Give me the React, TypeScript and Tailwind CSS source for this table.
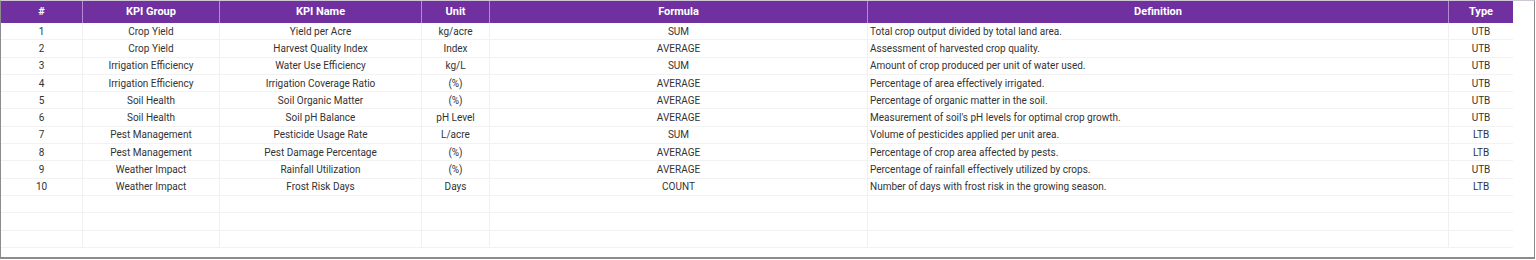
import React from "react";

const rows = [
  ["1", "Crop Yield", "Yield per Acre", "kg/acre", "SUM", "Total crop output divided by total land area.", "UTB"],
  ["2", "Crop Yield", "Harvest Quality Index", "Index", "AVERAGE", "Assessment of harvested crop quality.", "UTB"],
  ["3", "Irrigation Efficiency", "Water Use Efficiency", "kg/L", "SUM", "Amount of crop produced per unit of water used.", "UTB"],
  ["4", "Irrigation Efficiency", "Irrigation Coverage Ratio", "(%)", "AVERAGE", "Percentage of area effectively irrigated.", "UTB"],
  ["5", "Soil Health", "Soil Organic Matter", "(%)", "AVERAGE", "Percentage of organic matter in the soil.", "UTB"],
  ["6", "Soil Health", "Soil pH Balance", "pH Level", "AVERAGE", "Measurement of soil's pH levels for optimal crop growth.", "UTB"],
  ["7", "Pest Management", "Pesticide Usage Rate", "L/acre", "SUM", "Volume of pesticides applied per unit area.", "LTB"],
  ["8", "Pest Management", "Pest Damage Percentage", "(%)", "AVERAGE", "Percentage of crop area affected by pests.", "LTB"],
  ["9", "Weather Impact", "Rainfall Utilization", "(%)", "AVERAGE", "Percentage of rainfall effectively utilized by crops.", "UTB"],
  ["10", "Weather Impact", "Frost Risk Days", "Days", "COUNT", "Number of days with frost risk in the growing season.", "LTB"],
  ["", "", "", "", "", "", ""],
  ["", "", "", "", "", "", ""],
  ["", "", "", "", "", "", ""],
];

const headers = ["#", "KPI Group", "KPI Name", "Unit", "Formula", "Definition", "Type"];

export default function App() {
  return (
    <div className="w-[1536px] h-[260px] bg-white" style={{ fontFamily: "Roboto, 'Liberation Sans', sans-serif" }}>
      <div className="w-[1535px] h-[259px] border-l border-r border-b-2 border-[#8c8c8c] border-t border-t-[#cfc6d6] flex flex-col">
        <div className="grid grid-cols-[82px_137px_202px_68px_378px_581px_64px] h-[22px] bg-[#7030a0] w-[1512px]">
          {headers.map((h, i) => (
            <div
              key={i}
              className={`flex items-center justify-center text-white font-bold text-[11px] ${i < 6 ? "border-r border-[#b38bd3]" : ""}`}
            >
              {h}
            </div>
          ))}
        </div>
        {rows.map((r, ri) => (
          <div key={ri} className="grid grid-cols-[82px_137px_202px_68px_378px_581px_64px] h-[17.3px] w-[1512px] border-b border-[#f2f2f2]">
            {r.map((c, ci) => (
              <div
                key={ci}
                className={`flex items-center text-[10px] text-[#333333] whitespace-nowrap ${ci === 5 ? "justify-start pl-[2px]" : "justify-center"} ${ci < 6 ? "border-r border-[#f0f0f0]" : ""}`}
              >
                {c}
              </div>
            ))}
          </div>
        ))}
      </div>
    </div>
  );
}
